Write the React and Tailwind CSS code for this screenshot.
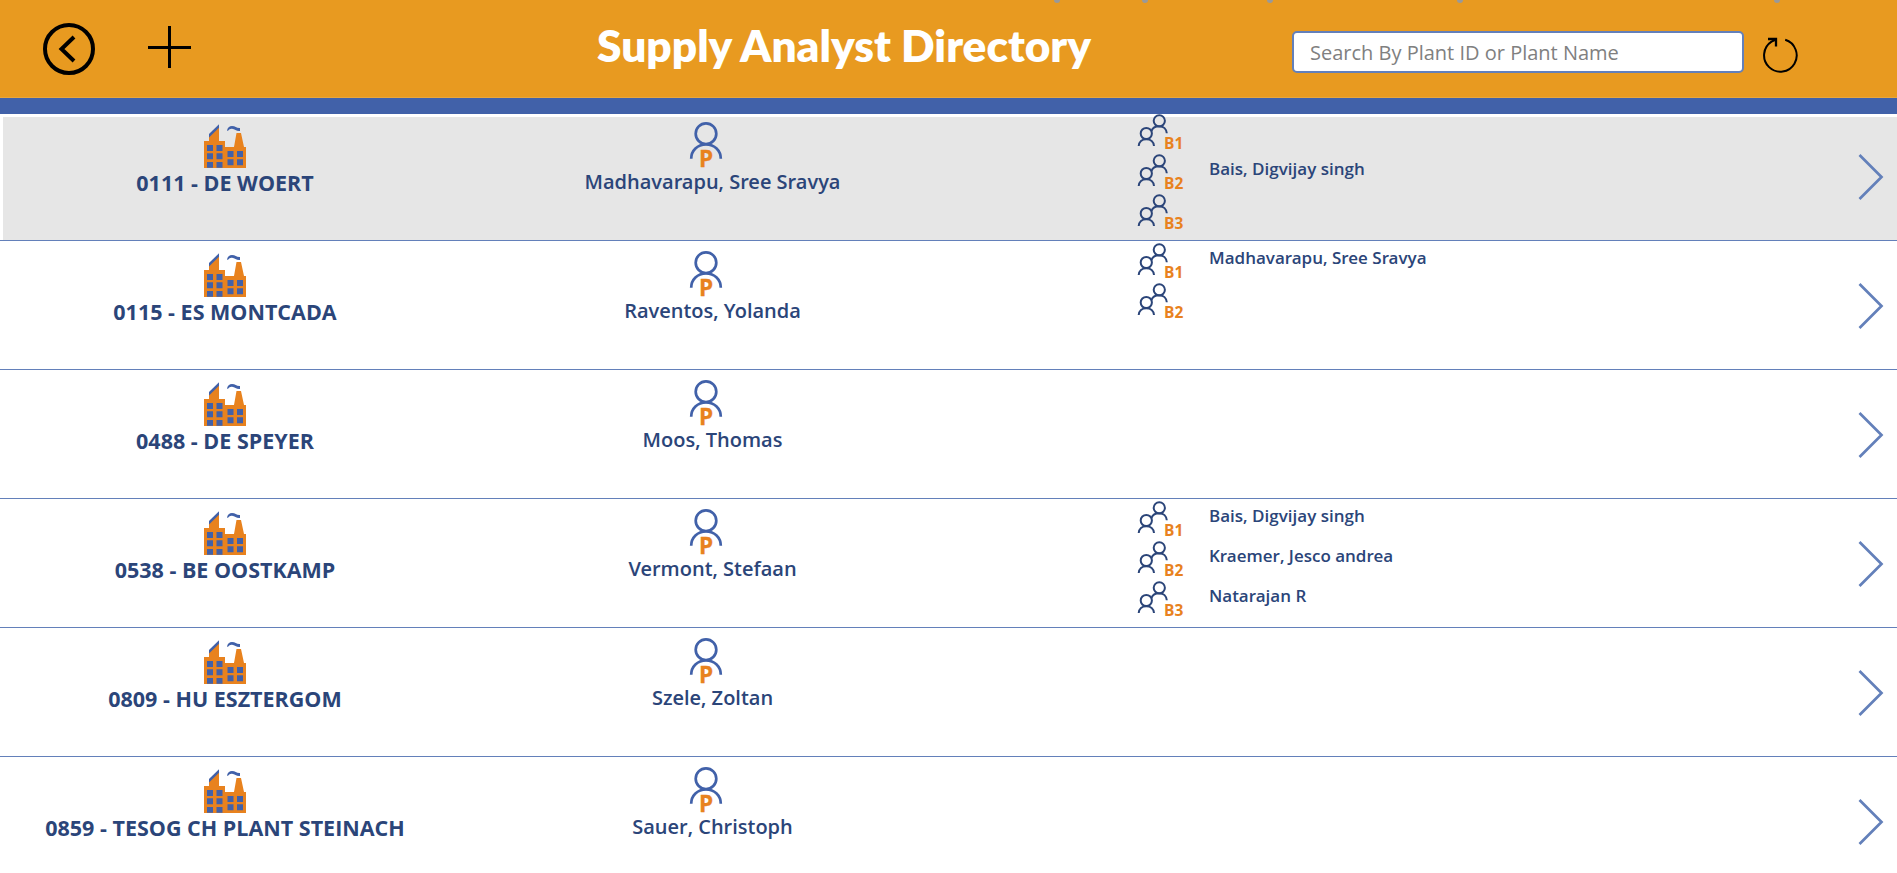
const plants = [
  { name: "0111 - DE WOERT", primary: "Madhavarapu, Sree Sravya", selected: true, backups: ["", "Bais, Digvijay singh", ""] },
  { name: "0115 - ES MONTCADA", primary: "Raventos, Yolanda", backups: ["Madhavarapu, Sree Sravya", ""] },
  { name: "0488 - DE SPEYER", primary: "Moos, Thomas", backups: [] },
  { name: "0538 - BE OOSTKAMP", primary: "Vermont, Stefaan", backups: ["Bais, Digvijay singh", "Kraemer, Jesco andrea", "Natarajan R"] },
  { name: "0809 - HU ESZTERGOM", primary: "Szele, Zoltan", backups: [] },
  { name: "0859 - TESOG CH PLANT STEINACH", primary: "Sauer, Christoph", backups: [] },
];

function Factory() {
  return (
    <svg width="42" height="44" viewBox="0 0 42 44" className="block">
      <path d="M0 17H5V12L15 2V17H21V23H30L32.500 9H37L40 23H42V44H0Z" fill="#e8821e" />
      <path d="M5 10L15 .3V3.800L5 13.500Z" fill="#4161a9" />
      <path d="M23 6.800C23.300 3.500 25.500 2 28 2C31.500 2 32.500 4.300 36 4V7C32.500 7.500 31 5 28 4.700C26 4.600 25.200 5.300 24 6.800Z" fill="#4161a9" />
      <path d="M3 21h6v6h-6zM12.500 21h6v6h-6zM3 29.300h6v6h-6zM12.500 29.300h6v6h-6zM3 38h6v5.700h-6zM12.500 38h6v5.700h-6zM23.500 27h6v6h-6zM33 27h6v6h-6zM23.500 35.300h6v6h-6zM33 35.300h6v6h-6z" fill="#4161a9" />
    </svg>
  );
}

function Primary() {
  return (
    <svg width="34" height="46" viewBox="0 0 34 46" className="block overflow-visible">
      <g fill="none" stroke="#4161a9" strokeWidth="2.700">
        <circle cx="17" cy="11.700" r="10.300" />
        <path d="M2.200 36.800C2.200 28.500 8.500 22.500 17 22.500S31.800 28.500 31.800 36.800" />
      </g>
      <text x="9.900" y="45" fontFamily="Open Sans, sans-serif" fontWeight="700" fontSize="22.500" fill="#e8821e" stroke="#e8821e" strokeWidth=".3">P</text>
    </svg>
  );
}

function Backup({ n }) {
  return (
    <svg width="50" height="40" viewBox="0 0 50 40" className="block shrink-0">
      <g fill="none" stroke="#2b4579" strokeWidth="2">
        <circle cx="23.300" cy="6.800" r="5.600" />
        <circle cx="10.300" cy="19.500" r="5.600" />
        <path d="M2.700 32C3 28 6 25.200 10.300 25.200S17.700 28 18 32M15.500 17C16.500 14 19.500 12.200 23.300 12.200C27.500 12.200 30.500 15 30.800 19.200" />
      </g>
      <text x="28" y="35" fontFamily="Open Sans, sans-serif" fontWeight="700" fontSize="15.500" fill="#e8821e">B{n}</text>
    </svg>
  );
}

function PlantRow({ plant }) {
  return (
    <div className="flex h-[129px] shrink-0 items-start border-b border-[#6380ba]">
      <div className={`ml-[3px] flex h-full w-full pt-[5px] ${plant.selected ? "bg-[#e6e6e6] bg-clip-content" : ""}`}>
        <div className="flex w-[444px] shrink-0 flex-col items-center pt-[7px]">
          <Factory />
          <div className="mt-[2px] text-[21.5px] leading-[26px] font-bold whitespace-nowrap text-[#2b4579]">{plant.name}</div>
        </div>
        <div className="flex w-[517px] shrink-0 flex-col items-center pt-[5px]">
          <Primary />
          <div className="mt-px ml-[14px] font-['Open_Sans_SemiBold','Open_Sans',sans-serif] text-[20px] leading-[26px] whitespace-nowrap text-[#2b4579]">{plant.primary}</div>
        </div>
        <div className="-mt-[3px] ml-[172px] flex flex-1 flex-col">
          {plant.backups.map((b, i) => (
            <div key={i} className="flex h-10 items-start">
              <Backup n={i + 1} />
              <span className="ml-[23px] pt-[3px] font-['Open_Sans_SemiBold','Open_Sans',sans-serif] text-[17px] leading-6 text-[#2b4579]">{b}</span>
            </div>
          ))}
        </div>
        <svg width="26" height="46" viewBox="0 0 26 46" className="mt-[37px] mr-[13px] shrink-0">
          <path d="M1.500 1L23.500 23L1.500 45" fill="none" stroke="#6380ba" strokeWidth="2.700" />
        </svg>
      </div>
    </div>
  );
}

export default function App() {
  return (
    <div className="flex h-[873px] w-[1897px] flex-col overflow-hidden bg-white font-['Open_Sans',sans-serif]">
      <header className="relative flex h-[98px] shrink-0 items-start border-b border-[#e9a63c] bg-[#e89a20]">
        <span className="absolute -top-[3px] left-[1054px] size-1.5 rounded-full bg-[#999]" />
        <span className="absolute -top-[3px] left-[1142px] size-1.5 rounded-full bg-[#999]" />
        <span className="absolute -top-[3px] left-[1267px] size-1.5 rounded-full bg-[#999]" />
        <span className="absolute -top-[3px] left-[1457px] size-1.5 rounded-full bg-[#999]" />
        <span className="absolute -top-[3px] left-[1774px] size-1.5 rounded-full bg-[#999]" />
        <svg width="52" height="52" viewBox="0 0 52 52" className="mt-[23px] ml-[43px]" fill="none" stroke="#000" strokeWidth="4">
          <circle cx="26" cy="26" r="24" />
          <path d="M31 14L18.500 26L31 38" />
        </svg>
        <svg width="44" height="42" viewBox="0 0 44 42" className="mt-[26px] ml-[53px]" stroke="#000" strokeWidth="3">
          <path d="M0 21.500H43M21.500 0V42" />
        </svg>
        <h1 className="mt-[17px] ml-[405px] w-[500px] font-['Lato',sans-serif] text-[44.2px] leading-[56px] font-extrabold whitespace-nowrap text-white">Supply Analyst Directory</h1>
        <input className="mt-[31px] ml-[195px] h-[42px] w-[452px] rounded-[5px] border-2 border-[#6380ba] bg-white px-4 text-[20px] placeholder:text-[#808080]" placeholder="Search By Plant ID or Plant Name" />
        <svg width="36" height="36" viewBox="0 0 36 36" className="mt-[37px] ml-[18px]" fill="none" stroke="#000" strokeWidth="2">
          <path d="M23.200 2.800A16.300 16.300 0 1 1 9.500 4.700L14 2.500" />
          <path d="M6 2H14V9.500" strokeWidth="2.300" />
        </svg>
      </header>
      <div className="h-4 shrink-0 bg-[#4161a9]" />
      <main className="-mt-[2px] flex flex-col">
        {plants.map((p) => <PlantRow key={p.name} plant={p} />)}
      </main>
    </div>
  );
}
